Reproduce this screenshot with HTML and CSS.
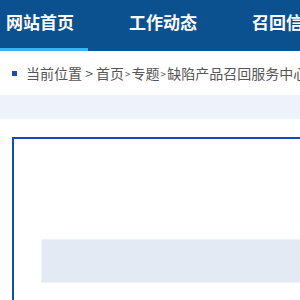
FILE: index.html
```html
<!DOCTYPE html>
<html lang="zh-CN">
<head>
  <meta charset="UTF-8">
  <title>缺陷产品召回服务中心</title>
  <link rel="stylesheet" href="styles.css">
</head>
<body>

  <!-- TOP NAV -->
  <div id="nav">
    <a class="nav-item active" href="#">网站首页</a>
    <a class="nav-item" href="#">工作动态</a>
    <a class="nav-item" href="#">召回信息</a>
    <a class="nav-item" href="#">法规标准</a>
  </div>

  <!-- BREADCRUMB -->
  <div id="crumb">
    <span class="crumb-dot"></span>
    <span>当前位置 &gt; 首页</span><span class="sep">&gt;</span><span>专题</span><span class="sep">&gt;</span><span>缺陷产品召回服务中心</span>
  </div>

  <div class="band"></div>

  <!-- CONTENT BOX -->
  <div id="content-box">
    <div class="search-block"></div>
  </div>

</body>
</html>
```

FILE: styles.css
```css
body {
  margin: 0;
  padding: 0;
  background-color: #fff;
  font-family: "Noto Sans CJK SC", "Noto Sans", sans-serif;
  overflow: hidden;
  width: 300px;
  height: 300px;
}

#nav {
  display: flex;
  height: 51px;
  background-color: #0b5190;
  white-space: nowrap;
}

.nav-item {
  display: block;
  height: 48px;
  line-height: 44px;
  margin-left: 55px;
  color: #fff;
  font-size: 17px;
  font-weight: bold;
  text-decoration: none;
  flex-shrink: 0;
}

.nav-item.active {
  margin-left: 0;
  padding: 0 14px 0 6px;
  border-bottom: 3px solid #3ab4f0;
}

.nav-item.active + .nav-item {
  margin-left: 41px;
}

#crumb {
  display: flex;
  align-items: center;
  height: 44px;
  padding-left: 12px;
  color: #555;
  font-size: 14px;
  white-space: nowrap;
}

.crumb-dot {
  width: 5px;
  height: 5px;
  background-color: #1a4ea0;
  margin-right: 9px;
  flex-shrink: 0;
}

.sep {
  font-size: 10px;
  padding: 0 1px;
}

.band {
  height: 24px;
  background-color: #eef2fa;
}

#content-box {
  width: 1000px;
  height: 400px;
  margin: 18px 0 0 12px;
  padding: 100px 0 0 27px;
  border: 2px solid #1150b0;
}

.search-block {
  height: 42px;
  background-color: #e3eaf4;
  border: 1px solid #edf2f8;
}
```
